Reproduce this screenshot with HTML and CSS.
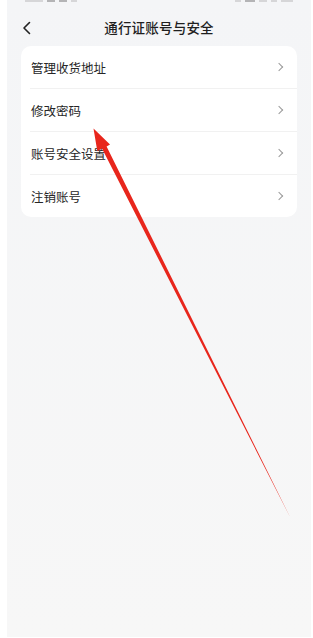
FILE: index.html
```html
<!DOCTYPE html>
<html lang="zh-CN">
<head>
    <meta charset="UTF-8">
    <meta name="viewport" content="width=device-width, initial-scale=1.0">
    <title>通行证账号与安全</title>
    <link rel="stylesheet" href="styles.css">
</head>
<body>
    <div class="screen">
        <!-- ステータスバー（上が切れていて、端だけ見える） -->
        <div class="status-bar">
            <div class="status-group">
                <span class="dot w18"></span><span class="dot w8 dark"></span><span class="dot w8 dark"></span><span class="dot w6"></span>
            </div>
            <div class="status-group">
                <span class="dot w6"></span><span class="dot w10 dark"></span><span class="dot w8"></span><span class="dot w6"></span><span class="dot w12"></span>
            </div>
        </div>

        <div class="nav-bar">
            <svg class="back-icon" width="10" height="14" viewBox="0 0 10 14">
                <polyline points="7.5,1.5 2,7 7.5,12.5" fill="none" stroke="#222" stroke-width="1.6" stroke-linecap="round" stroke-linejoin="round"/>
            </svg>
            <div class="nav-title">通行证账号与安全</div>
        </div>

        <div class="menu-card">
            <div class="menu-item"><span>管理收货地址</span><span class="chevron"></span></div>
            <div class="menu-item"><span>修改密码</span><span class="chevron"></span></div>
            <div class="menu-item"><span>账号安全设置</span><span class="chevron"></span></div>
            <div class="menu-item"><span>注销账号</span><span class="chevron"></span></div>
        </div>

        <!-- 注釈の赤い矢印 -->
        <svg class="arrow" width="304" height="637" viewBox="0 0 304 637">
            <polygon points="86.5,128.5 103,144.4 99.6,146.4 283,517 95,148.4 90.3,151.2" fill="#e8261c"/>
        </svg>
    </div>
</body>
</html>
```

FILE: styles.css
```css
body {
    margin: 0;
    background-color: #fff;
    font-family: 'Noto Sans CJK SC', 'Noto Sans', sans-serif;
    color: #222;
}

.screen {
    position: relative;
    margin-left: 7px;
    width: 304px;
    height: 637px;
    background: linear-gradient(180deg, #f4f5f7 0%, #f7f7f7 100%);
    overflow: hidden;
}

/* 上端だけ見えているステータスバー */
.status-bar {
    height: 3px;
    display: flex;
    justify-content: space-between;
    padding: 0 18px 0 18px;
}

.status-group {
    display: flex;
    gap: 4px;
}

.dot {
    height: 2px;
    background-color: #d6d6d8;
}

.dot.dark {
    background-color: #b4b4b6;
}

.w6 { width: 6px; }
.w8 { width: 8px; }
.w10 { width: 10px; }
.w12 { width: 12px; }
.w18 { width: 18px; }

.nav-bar {
    position: relative;
    height: 39px;
    padding-top: 4px;
    display: flex;
    align-items: center;
    justify-content: center;
}

.back-icon {
    position: absolute;
    left: 15px;
    top: 18px;
}

.nav-title {
    font-size: 13.5px;
    font-weight: 500;
    color: #1f1f1f;
    letter-spacing: 0.2px;
}

.menu-card {
    margin: 0 14px;
    background-color: #fff;
    border-radius: 10px;
    padding-left: 9px;
}

.menu-item {
    height: 42px;
    display: flex;
    align-items: center;
    justify-content: space-between;
    padding: 0 13px 0 1px;
    font-size: 12.5px;
    color: #262626;
    border-bottom: 1px solid #f1f1f1;
}

.menu-item:last-child {
    border-bottom: none;
}

/* 右向きの矢印 */
.chevron {
    width: 5px;
    height: 5px;
    border-top: 1px solid #9a9a9a;
    border-right: 1px solid #9a9a9a;
    transform: rotate(45deg);
    margin-right: 2px;
}

.arrow {
    position: absolute;
    left: 0;
    top: 0;
    pointer-events: none;
}
```
